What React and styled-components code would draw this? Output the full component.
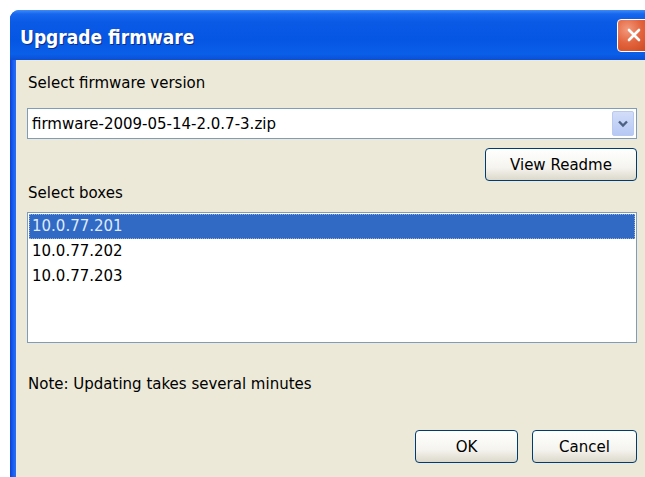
import React, { useState } from "react";
import styled, { createGlobalStyle } from "styled-components";

const GlobalStyle = createGlobalStyle`
  html, body {
    margin: 0;
    padding: 0;
    background: #ffffff;
    overflow: hidden;
  }
  body {
    width: 645px;
    height: 477px;
  }
`;

const boxes = ["10.0.77.201", "10.0.77.202", "10.0.77.203"];

const App = () => {
  const [selected, setSelected] = useState(0); // currently highlighted box

  return (
    <>
      <GlobalStyle />
      <Page>
        <Window>
          <TitleBar>
            <Title>Upgrade firmware</Title>
            <CloseButton aria-label="Close">
              <svg width="18" height="18" viewBox="0 0 18 18">
                <path
                  d="M4 4 L14 14 M14 4 L4 14"
                  stroke="#ffffff"
                  strokeWidth="2.6"
                  strokeLinecap="round"
                />
              </svg>
            </CloseButton>
          </TitleBar>

          <Client>
            <Label>Select firmware version</Label>
            <Combo>
              <ComboText>firmware-2009-05-14-2.0.7-3.zip</ComboText>
              <ComboArrow>
                <svg width="12" height="8" viewBox="0 0 12 8">
                  <path
                    d="M2 1.5 L6 5.5 L10 1.5"
                    fill="none"
                    stroke="#4d6185"
                    strokeWidth="2.4"
                  />
                </svg>
              </ComboArrow>
            </Combo>

            <ReadmeRow>
              <Button $width={152}>View Readme</Button>
            </ReadmeRow>

            <Label $top={2}>Select boxes</Label>
            <ListBox>
              {boxes.map((ip, i) => (
                <ListItem
                  key={ip}
                  $active={i === selected}
                  onClick={() => setSelected(i)}
                >
                  {ip}
                </ListItem>
              ))}
            </ListBox>

            <Note>Note: Updating takes several minutes</Note>

            <ButtonRow>
              <Button $width={103}>OK</Button>
              <Button $width={105}>Cancel</Button>
            </ButtonRow>
          </Client>
        </Window>
      </Page>
    </>
  );
};

export default App;

// Styled components
const Page = styled.div`
  width: 645px;
  height: 477px;
  padding: 10px 0 0 10px;
  box-sizing: border-box;
  overflow: hidden;
  font-family: "DejaVu Sans", sans-serif;
`;

const Window = styled.div`
  width: 660px;
  border-radius: 9px 9px 0 0;
  background: linear-gradient(to right, #0a3fd8 0px, #1a5ef0 3px, #2a6ff5 6px);
  padding: 0 6px 0 6px;
`;

const TitleBar = styled.div`
  height: 50px;
  margin: 0 -6px;
  padding: 0 0 0 10px;
  display: flex;
  align-items: center;
  justify-content: space-between;
  border-radius: 9px 9px 0 0;
  background: linear-gradient(
    to bottom,
    #3d8cf7 0px,
    #1866ee 4px,
    #0a5ae6 12px,
    #0656e4 30px,
    #0a5fe8 44px,
    #0b4fd4 50px
  );
`;

const Title = styled.span`
  color: #ffffff;
  font-family: "DejaVu Sans Condensed", "DejaVu Sans", sans-serif;
  font-weight: bold;
  font-size: 19px;
  text-shadow: 1px 1px 0 #0a2e8c;
  margin-top: 3px;
`;

const CloseButton = styled.div`
  width: 34px;
  height: 33px;
  margin-right: 31px;
  box-sizing: border-box;
  border: 1px solid #ffffff;
  border-radius: 4px;
  background: radial-gradient(
    circle at 30% 30%,
    #f29a7c 0%,
    #e2643e 45%,
    #c9441b 100%
  );
  display: flex;
  align-items: center;
  justify-content: center;
`;

const Client = styled.div`
  background: #ece9d8;
  padding: 13px 39px 40px 11px;
  display: flex;
  flex-direction: column;
  color: #000000;
  font-size: 15px;
`;

const Label = styled.div`
  padding-left: 1px;
  margin-top: ${({ $top }) => $top || 0}px;
  height: 20px;
  line-height: 20px;
`;

const Combo = styled.div`
  margin-top: 15px;
  height: 31px;
  box-sizing: border-box;
  border: 1px solid #7f9db9;
  background: #ffffff;
  display: flex;
  align-items: center;
  justify-content: space-between;
  padding: 0 2px 0 4px;
`;

const ComboText = styled.span`
  font-size: 15px;
`;

const ComboArrow = styled.div`
  width: 22px;
  height: 25px;
  box-sizing: border-box;
  border: 1px solid #b9c9ef;
  border-radius: 2px;
  background: linear-gradient(to bottom, #d2ddf8, #b6c8f4);
  display: flex;
  align-items: center;
  justify-content: center;
`;

const ReadmeRow = styled.div`
  display: flex;
  justify-content: flex-end;
  margin-top: 9px;
`;

const Button = styled.button`
  width: ${({ $width }) => $width}px;
  height: 33px;
  box-sizing: border-box;
  border: 1px solid #003c74;
  border-radius: 4px;
  background: linear-gradient(to bottom, #ffffff 0%, #f5f4ef 60%, #dcd8cb 100%);
  font-family: "DejaVu Sans", sans-serif;
  font-size: 15px;
  color: #000000;
  padding: 0;
  cursor: pointer;
`;

const ListBox = styled.div`
  margin-top: 9px;
  height: 131px;
  box-sizing: border-box;
  border: 1px solid #7f9db9;
  background: #ffffff;
  padding: 1px 1px;
`;

const ListItem = styled.div`
  height: 25px;
  line-height: 23px;
  padding-left: 2px;
  font-size: 15px;
  background: ${({ $active }) => ($active ? "#316ac5" : "transparent")};
  color: ${({ $active }) => ($active ? "#dfe9fb" : "#000000")};
  border: 1px dotted ${({ $active }) => ($active ? "#8faee0" : "transparent")};
  box-sizing: border-box;
  cursor: default;
`;

const Note = styled.div`
  margin-top: 31px;
  padding-left: 1px;
  height: 20px;
  line-height: 20px;
`;

const ButtonRow = styled.div`
  display: flex;
  justify-content: flex-end;
  gap: 14px;
  margin-top: 36px;
`;
